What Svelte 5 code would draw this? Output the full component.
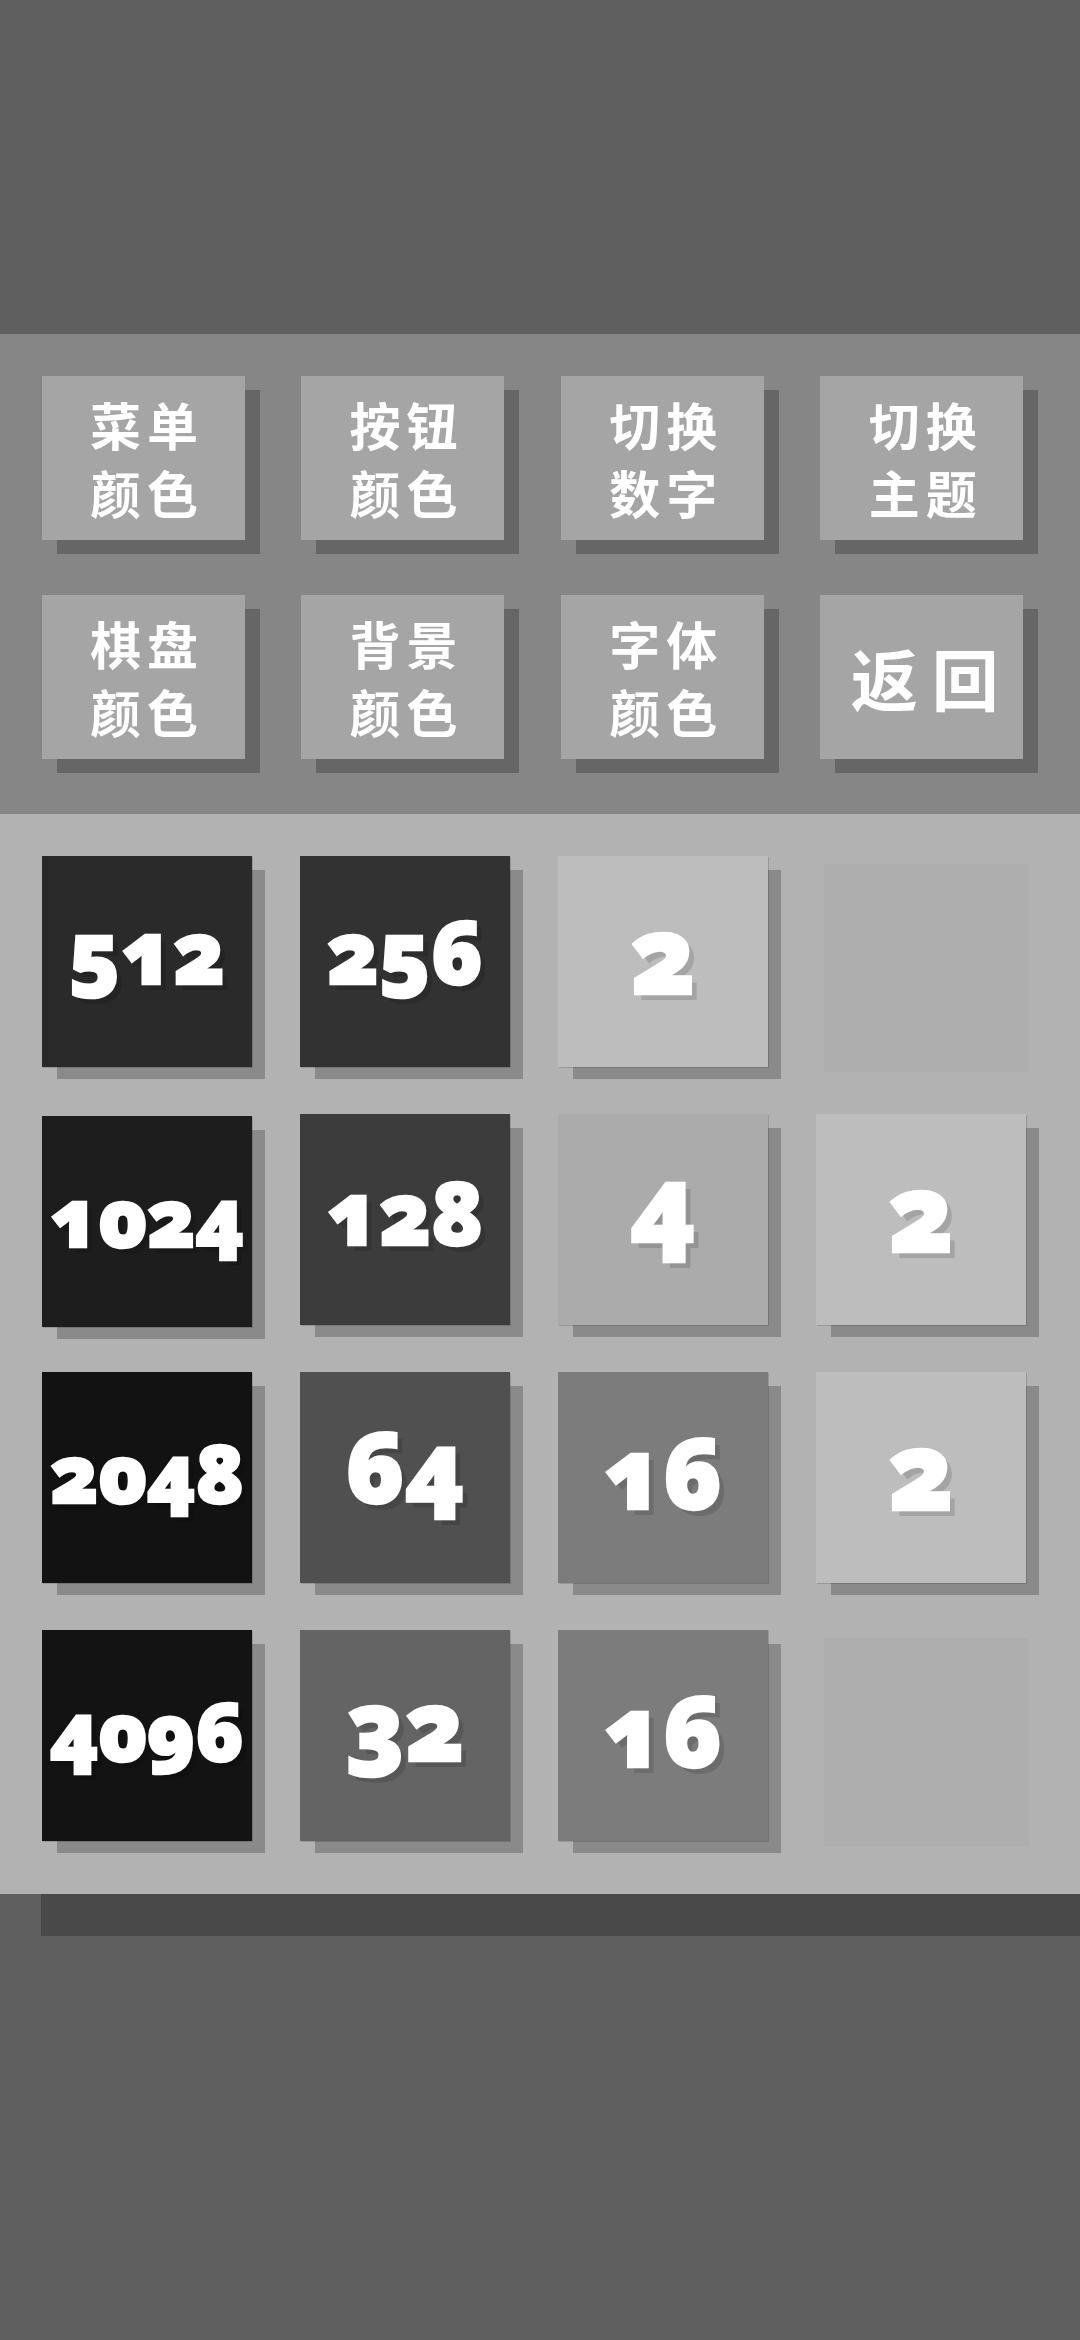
<script>
  const buttons = [
    ['菜单', '颜色'], ['按钮', '颜色'], ['切换', '数字'], ['切换', '主题'],
    ['棋盘', '颜色'], ['背景', '颜色'], ['字体', '颜色'], ['返回']
  ];
  const tiles = [
    [512, '#2a2a2a'], [256, '#323232'], [2, '#bdbdbd'], [null, ''],
    [1024, '#1d1d1d'], [128, '#3c3c3c'], [4, '#ababab'], [2, '#bdbdbd'],
    [2048, '#121212'], [64, '#505050'], [16, '#7c7c7c'], [2, '#bdbdbd'],
    [4096, '#131313'], [32, '#646464'], [16, '#7c7c7c'], [null, '']
  ];
  // The numerals do not share a baseline in the game: each value sits at its own height.
  const lift = { 2: 19, 4: 35, 16: 13, 32: 25, 64: 25, 128: 17, 256: 23, 512: 23, 1024: 13, 2048: 13, 4096: 13 };
  const sizeClass = (v) => (v >= 1000 ? 'd4' : v >= 100 ? 'd3' : v >= 10 ? 'd2' : 'd1');
</script>

<main class="page">
  <section class="menu">
    {#each buttons as lines}
      <button class="btn" class:single={lines.length === 1}>
        {#each lines as line}<span>{line}</span>{/each}
      </button>
    {/each}
  </section>
  <section class="board">
    {#each tiles as [value, color], i}
      {#if value}
        <div class="tile {sizeClass(value)}" class:nudge={i === 4} style:background={color} style:padding-bottom="{lift[value]}px">{value}</div>
      {:else}
        <div class="empty"></div>
      {/if}
    {/each}
  </section>
</main>

<style>
  :global(body) { margin: 0; background: #5f5f5f; }
  .page { width: 1080px; height: 2340px; padding-top: 334px; box-sizing: border-box; overflow: hidden; }
  .menu {
    height: 480px; box-sizing: border-box; background: #868686;
    padding: 42px 0 0 41.5px;
    display: grid; grid-template-columns: repeat(4, 203px); grid-auto-rows: 164px;
    column-gap: 56.6px; row-gap: 55px;
  }
  .btn {
    border: 0; padding: 0 0 0 8px; margin: 0; background: #a5a5a5; color: #fff;
    box-shadow: 15px 14px 0 #666;
    display: flex; flex-direction: column; align-items: center; justify-content: center;
    font-family: "Noto Sans CJK SC", sans-serif; font-weight: 700; font-size: 51px;
    line-height: 68px; letter-spacing: 6px;
  }
  .btn.single { font-size: 67px; letter-spacing: 14px; padding-left: 20px; }
  .board {
    height: 1080px; box-sizing: border-box; background: #b2b2b2;
    box-shadow: 41px 42px 0 #494949;
    padding: 42px 0 0 42px;
    display: grid; grid-template-columns: repeat(4, 210px); grid-auto-rows: 211px;
    column-gap: 48px; row-gap: 47px;
  }
  .tile {
    display: flex; align-items: center; justify-content: center;
    color: #fff; box-shadow: 1px 1px 0 rgba(0,0,0,.15), 14px 13px 0 -1px #8a8a8a;
    font-family: "Open Sans", sans-serif; font-weight: 800;
    font-variant-numeric: oldstyle-nums; -webkit-text-stroke: 2.5px #fff;
    text-shadow: 6px 6px 0 rgba(0,0,0,.13); box-sizing: border-box;
  }
  .nudge { margin: 2px 0 -2px; }
  .d1 { font-size: 108px; }
  .d2 { font-size: 98px; }
  .d3 { font-size: 86px; }
  .d4 { font-size: 80px; }
  .empty { background: #aeaeae; margin: 8px -3px -5px 8px; }
</style>
